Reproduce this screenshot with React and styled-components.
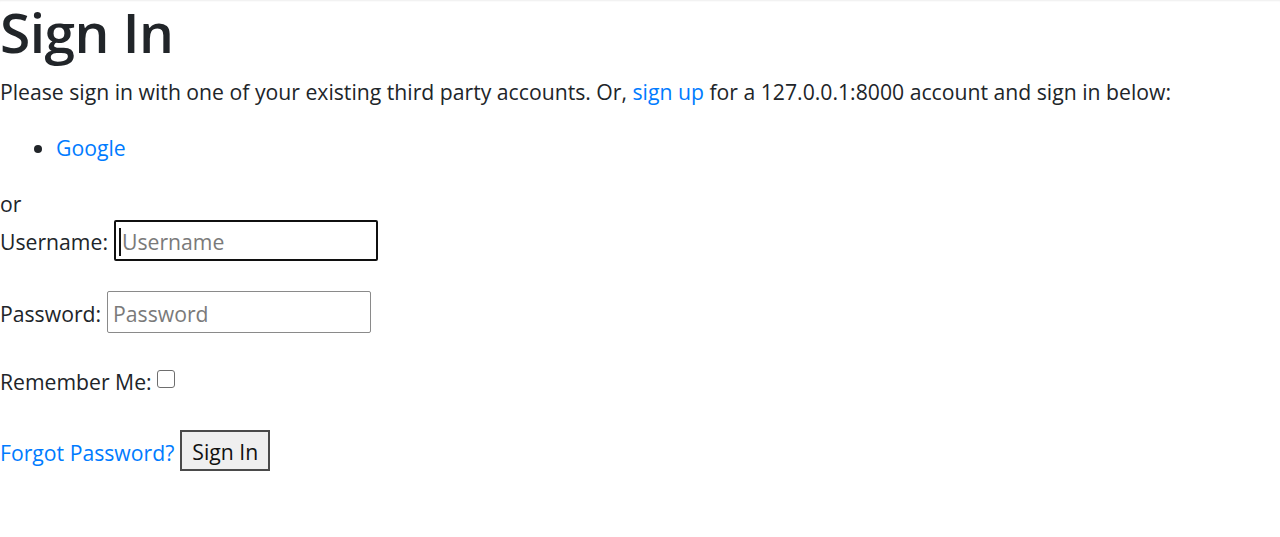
import styled, { createGlobalStyle, css } from "styled-components";

const GlobalStyle = createGlobalStyle`
  html, body {
    margin: 0;
    padding: 0;
    background: #fff;
  }
  body {
    font-family: "Open Sans", "Noto Sans", sans-serif;
    font-size: 21.2px;
    line-height: 33.6px;
    color: #212529;
  }
`;

const nudge = css`
  padding-top: 2px;
  margin-bottom: -2px;
`;

const Page = styled.div`
  min-height: 537px;
  box-shadow: inset 0 2px 2px -1px rgba(0, 0, 0, 0.07);
`;

const Title = styled.h1`
  margin: 0;
  font-size: 55px;
  line-height: 64px;
  font-weight: 600;
  letter-spacing: -0.5px;
`;

const Intro = styled.p`
  margin: 11px 0 0;
`;

const Link = styled.a`
  color: #007bff;
  text-decoration: none;
`;

const FormLink = styled(Link)`
  ${nudge}
`;

const ProviderList = styled.ul`
  margin: 22.4px 0 0;
  padding-left: 56px;
`;

const Provider = styled.li``;

const Or = styled.div`
  margin-top: 22.4px;
`;

const Form = styled.form`
  margin-top: -1px;
`;

const Row = styled.p`
  display: flex;
  align-items: center;
  gap: 6px;
  margin: 0 0 ${(p) => p.$after || 0}px;
`;

const Label = styled.label`
  ${nudge}
`;

const InputWrap = styled.span`
  position: relative;
  display: inline-flex;

  &::before {
    content: "";
    display: ${(p) => (p.$caret ? "block" : "none")};
    position: absolute;
    left: 5px;
    top: 8px;
    width: 2px;
    height: 28px;
    background: #111;
  }
`;

const Input = styled.input`
  box-sizing: border-box;
  width: 264px;
  height: ${(p) => (p.$focused ? 41 : 42)}px;
  padding: 3px ${(p) => (p.$focused ? 6 : 5)}px 0;
  font: inherit;
  color: #212529;
  background: #fff;
  border: ${(p) => (p.$focused ? "2px solid #101010" : "1px solid #8a8a8a")};
  border-radius: 2px;
  outline: none;

  &::placeholder {
    color: #7a7a7a;
  }
`;

const Check = styled.span`
  box-sizing: border-box;
  display: inline-block;
  width: 18px;
  height: 18px;
  border: 1px solid #6e6e6e;
  border-radius: 3px;
  background: #fff;
  margin-left: -1px;
`;

const Button = styled.button`
  box-sizing: border-box;
  width: 90px;
  height: 41px;
  padding: 3px 0 0;
  font: inherit;
  color: #111;
  background: #efefef;
  border: 2px solid #4a4a4a;
  border-radius: 0;
  cursor: pointer;
`;

const App = () => {
  return (
    <Page>
      <GlobalStyle />
      <Title>Sign In</Title>
      <Intro>
        Please sign in with one of your existing third party accounts. Or,{" "}
        <Link href="#">sign up</Link> for a 127.0.0.1:8000 account and sign in
        below:
      </Intro>
      <ProviderList>
        <Provider>
          <Link href="#">Google</Link>
        </Provider>
      </ProviderList>
      <Or>or</Or>
      <Form onSubmit={(e) => e.preventDefault()}>
        <Row $after={30}>
          <Label htmlFor="id_login">Username:</Label>
          <InputWrap $caret>
            <Input id="id_login" placeholder="Username" $focused />
          </InputWrap>
        </Row>
        <Row $after={30}>
          <Label htmlFor="id_password">Password:</Label>
          <InputWrap>
            <Input id="id_password" type="password" placeholder="Password" />
          </InputWrap>
        </Row>
        <Row $after={34}>
          <Label>Remember Me:</Label>
          <Check role="checkbox" aria-checked="false" />
        </Row>
        <Row>
          <FormLink href="#">Forgot Password?</FormLink>
          <Button type="submit">Sign In</Button>
        </Row>
      </Form>
    </Page>
  );
};

export default App;
